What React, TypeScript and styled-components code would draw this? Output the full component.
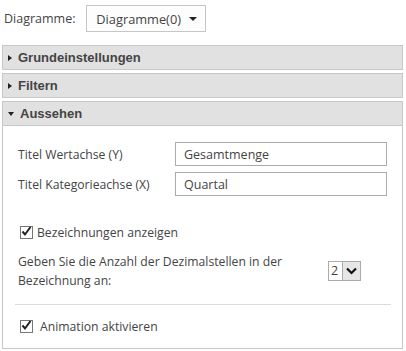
import styled, { createGlobalStyle } from "styled-components";

const GlobalStyle = createGlobalStyle`
  body {
    margin: 0;
    background: #fff;
    font-family: "Segoe UI", "Open Sans", sans-serif;
    font-size: 12.2px;
    color: #444;
  }
`

const Page = styled.div`
  width: 406px;
  padding: 5px 3px 0 2px;
  box-sizing: border-box;
`

const TopRow = styled.div`
  display: flex;
  align-items: center;
  padding-left: 2px;
  height: 27px;
  margin-bottom: 13px;
`

const TopLabel = styled.span`
  width: 82px;
  font-size: 12.5px;
  color: #444;
`

const DropButton = styled.button`
  display: flex;
  align-items: center;
  justify-content: flex-end;
  gap: 8px;
  width: 120px;
  height: 27px;
  padding: 0 8px 0 0;
  border: 1px solid #c6c6c6;
  background: #fdfdfd;
  font: inherit;
  font-size: 12.8px;
  color: #444;
`

const Caret = styled.span`
  width: 0;
  height: 0;
  border-left: 4px solid transparent;
  border-right: 4px solid transparent;
  border-top: 4px solid #222;
`

const Header = styled.div<{ $open?: boolean }>`
  display: flex;
  align-items: center;
  gap: 6px;
  height: 23px;
  padding-left: 5px;
  margin-bottom: ${(p) => (p.$open ? "0" : "3px")};
  background: #e1e1e1;
  border: 1px solid #c8c8c8;
  font-family: "Liberation Sans", Arial, sans-serif;
  font-weight: 700;
  font-size: 13px;
  color: #444;
`

const Arrow = styled.span<{ $open?: boolean }>`
  width: 0;
  height: 0;
  ${(p) =>
    p.$open
      ? `border-left: 3.5px solid transparent;
         border-right: 3.5px solid transparent;
         border-top: 4px solid #222;`
      : `border-top: 3.5px solid transparent;
         border-bottom: 3.5px solid transparent;
         border-left: 4px solid #222;`}
`

const Panel = styled.div`
  border: 1px solid #c8c8c8;
  border-top: none;
  height: 223px;
  padding: 16px 11px 0 14px;
  box-sizing: border-box;
`

const FieldGrid = styled.div`
  display: grid;
  grid-template-columns: 158px 212px;
  row-gap: 6px;
  align-items: center;
`

const FieldLabel = styled.label`
  padding-left: 1px;
  color: #444;
`

const TextInput = styled.input`
  height: 24px;
  box-sizing: border-box;
  border: 1px solid #ababab;
  padding: 0 8px;
  font: inherit;
  font-size: 12.5px;
  color: #444;
`

const Spacer = styled.div<{ $h: number }>`
  height: ${(p) => p.$h}px;
`

const CheckRow = styled.label<{ $gap: number }>`
  display: flex;
  align-items: center;
  gap: ${(p) => p.$gap}px;
  padding-left: 3px;
  color: #444;
`

const Box = styled.span`
  position: relative;
  width: 11px;
  height: 11px;
  border: 1px solid #777;
  background: #fff;
  display: inline-flex;
`

const CheckMark = styled.svg`
  position: absolute;
  left: -1px;
  top: -2px;
`

const DecimalRow = styled.div`
  display: flex;
  align-items: center;
  justify-content: space-between;
  padding-right: 30px;
  margin-top: 11px;
  line-height: 19px;
  color: #444;
`

const DecimalText = styled.div`
  width: 290px;
  padding-left: 1px;
`

const Spinner = styled.div`
  display: flex;
  height: 20px;
  border: 1px solid #ababab;
  box-sizing: border-box;
`

const SpinValue = styled.span`
  width: 11px;
  padding-left: 2px;
  line-height: 18px;
  font-size: 12.5px;
  color: #444;
`

const SpinButton = styled.span`
  width: 17px;
  background: #e6e6e6;
  border-left: 1px solid #ababab;
  display: flex;
  align-items: center;
  justify-content: center;
`

const Divider = styled.hr`
  border: none;
  border-top: 1px solid #dcdcdc;
  margin: 14px 0 13px -2px;
`

function Check() {
  return (
    <Box>
      <CheckMark width="13" height="13" viewBox="0 0 13 13">
        <path d="M2.5 6.5 L5 9.5 L10.5 2" fill="none" stroke="#222" strokeWidth="2" />
      </CheckMark>
    </Box>
  )
}

export default function App() {
  return (
    <>
      <GlobalStyle />
      <Page>
        <TopRow>
          <TopLabel>Diagramme:</TopLabel>
          <DropButton>
            Diagramme(0)
            <Caret />
          </DropButton>
        </TopRow>

        <Header>
          <Arrow />
          Grundeinstellungen
        </Header>
        <Header>
          <Arrow />
          Filtern
        </Header>
        <Header $open>
          <Arrow $open />
          Aussehen
        </Header>

        <Panel>
          <FieldGrid>
            <FieldLabel>Titel Wertachse (Y)</FieldLabel>
            <TextInput defaultValue="Gesamtmenge" />
            <FieldLabel>Titel Kategorieachse (X)</FieldLabel>
            <TextInput defaultValue="Quartal" />
          </FieldGrid>

          <Spacer $h={28} />
          <CheckRow $gap={4}>
            <Check />
            Bezeichnungen anzeigen
          </CheckRow>

          <DecimalRow>
            <DecimalText>
              Geben Sie die Anzahl der Dezimalstellen in der Bezeichnung an:
            </DecimalText>
            <Spinner>
              <SpinValue>2</SpinValue>
              <SpinButton>
                <svg width="11" height="8" viewBox="0 0 11 8">
                  <path d="M1 1.5 L5.5 6 L10 1.5" fill="none" stroke="#111" strokeWidth="2.2" />
                </svg>
              </SpinButton>
            </Spinner>
          </DecimalRow>

          <Divider />
          <CheckRow $gap={7}>
            <Check />
            Animation aktivieren
          </CheckRow>
        </Panel>
      </Page>
    </>
  )
}
